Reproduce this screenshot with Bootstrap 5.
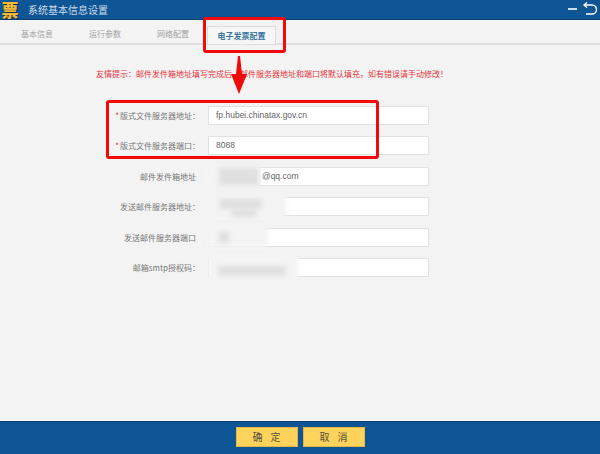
<!DOCTYPE html>
<html lang="zh">
<head>
<meta charset="utf-8">
<title>系统基本信息设置</title>
<link href="https://cdn.jsdelivr.net/npm/bootstrap@5.3.0/dist/css/bootstrap.min.css" rel="stylesheet">
<style>
html,body{height:454px;overflow:hidden}
body{background:#f3f3f3;font-family:"Noto Sans CJK SC","Liberation Sans",sans-serif;font-size:8px;color:#777;position:relative}
.shell{height:454px}
.topbar{height:20px;background:#0d5595;border-bottom:1px solid #0a4172;color:#cfdcea;font-size:10px}
.logo-mark{width:20px;height:19px;color:#f7b92f;font-size:17px;font-weight:900;line-height:19px;margin-right:8px;text-align:center;text-shadow:1px 1px 0 #0a2f52}
.tabstrip{height:25px;border-bottom:2px solid #dfdfdf;padding-left:3px;align-items:flex-end}
.tabitem{width:68px;height:23px;line-height:28px;text-align:center;color:#a2a2a2;font-size:8px}
.tabitem.on{width:69px;height:18px;line-height:18px;background:#f6f6f6;border:1px solid #dcdcdc;border-bottom:0;color:#3a76a0;font-weight:700;margin-bottom:-1px}
.hint{color:#e8333a;font-size:8px;padding:22px 0 0 96px;height:61px;line-height:13px;white-space:nowrap}
.frow{height:30.4px;align-items:flex-start}
.flabel{width:200px;text-align:right;height:19px;line-height:20px;white-space:nowrap}
.flabel i{font-style:normal;color:#d8232a;margin-right:1px}
.pad-end{padding-right:4px}
.fbox{margin-left:8px;width:221px;height:19px;background:#fff;border:1px solid #e2e2e2;line-height:17px;padding-left:7px;font-family:"Liberation Sans",sans-serif;font-size:8.5px;color:#666}
.fbox-inset{padding-left:53px}
.grow-area{flex:1 1 auto}
.foot{height:33px;background:#0d5595;border-top:1px solid #0a4172;padding-top:5px;gap:5px}
.foot .btn{width:62px;height:20px;padding:0;border-radius:0;background:#fdd35c;border:1px solid #e3b645;color:#55503a;font-size:10px;line-height:18px;letter-spacing:8px;text-indent:8px}
.redbox{position:absolute;border:3px solid #f00a0a;border-radius:3px}
.rb1{left:203px;top:17px;width:83px;height:36px}
.rb2{left:106px;top:100px;width:273px;height:59px}
.pointer{position:absolute;left:230px;top:54px}
.smudge{position:absolute;filter:blur(2px)}
.sw1{background:#f3f3f3}.sg{background:#e0e0e0}
.win-ctl{position:absolute;top:2px;left:567px}
</style>
</head>
<body>
<div class="shell d-flex flex-column">
  <div class="topbar d-flex align-items-center">
    <div class="logo-mark">票</div>
    <span>系统基本信息设置</span>
  </div>
  <div class="tabstrip d-flex">
    <div class="tabitem">基本信息</div>
    <div class="tabitem">运行参数</div>
    <div class="tabitem">网络配置</div>
    <div class="tabitem on">电子发票配置</div>
  </div>
  <div class="hint">友情提示：邮件发件箱地址填写完成后，邮件服务器地址和端口将默认填充，如有错误请手动修改！</div>
  <div class="frow d-flex"><div class="flabel"><i>*</i>版式文件服务器地址：</div><div class="fbox">fp.hubei.chinatax.gov.cn</div></div>
  <div class="frow d-flex"><div class="flabel"><i>*</i>版式文件服务器端口：</div><div class="fbox">8088</div></div>
  <div class="frow d-flex"><div class="flabel pad-end">邮件发件箱地址</div><div class="fbox fbox-inset">@qq.com</div></div>
  <div class="frow d-flex"><div class="flabel">发送邮件服务器地址：</div><div class="fbox"></div></div>
  <div class="frow d-flex"><div class="flabel pad-end">发送邮件服务器端口</div><div class="fbox"></div></div>
  <div class="frow d-flex"><div class="flabel">邮箱smtp授权码：</div><div class="fbox"></div></div>
  <div class="grow-area"></div>
  <div class="foot d-flex justify-content-center">
    <button type="button" class="btn">确定</button>
    <button type="button" class="btn">取消</button>
  </div>
</div>

<div class="smudge sw1" style="left:205px;top:165px;width:55px;height:23px"></div>
<div class="smudge sg" style="left:219px;top:168px;width:40px;height:17px"></div>
<div class="smudge sw1" style="left:206px;top:194px;width:80px;height:24px"></div>
<div class="smudge sg" style="left:220px;top:199px;width:42px;height:10px"></div>
<div class="smudge sg" style="left:232px;top:209px;width:24px;height:8px"></div>
<div class="smudge sw1" style="left:206px;top:225px;width:62px;height:23px"></div>
<div class="smudge sg" style="left:219px;top:232px;width:10px;height:11px"></div>
<div class="smudge sw1" style="left:208px;top:255px;width:90px;height:24px"></div>
<div class="smudge sg" style="left:219px;top:266px;width:66px;height:10px"></div>

<div class="redbox rb1"></div>
<div class="redbox rb2"></div>
<svg class="pointer" width="18" height="42" viewBox="0 0 18 42"><path d="M8 2h2l2 18h5L9 40 1 20h5z" fill="#f00a0a"/></svg>
<svg class="win-ctl" width="30" height="14" viewBox="0 0 30 14"><path d="M1 7h9" stroke="#fff" stroke-width="1.6"/><path d="M18 3h7a4.500 4.500 0 0 1 0 9h-6M20 .5 17 3l3 2.500" fill="none" stroke="#fff" stroke-width="1.4"/></svg>
<script src="https://cdn.jsdelivr.net/npm/bootstrap@5.3.0/dist/js/bootstrap.bundle.min.js"></script>
</body>
</html>
